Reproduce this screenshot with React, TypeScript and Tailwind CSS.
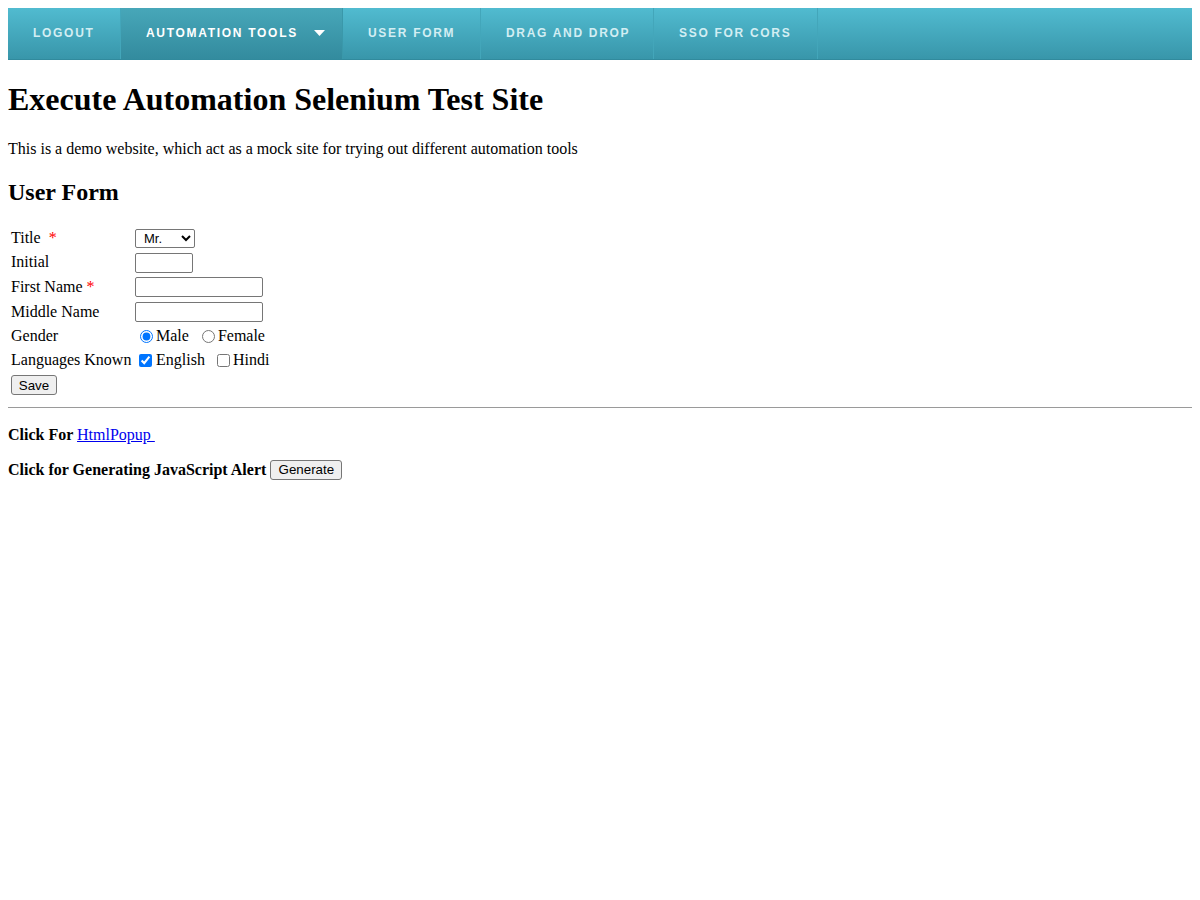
import { useState } from "react";

const navItems = [
	{ label: "LOGOUT", width: "w-[113px]" },
	{ label: "AUTOMATION TOOLS", width: "w-[222px]", active: true },
	{ label: "USER FORM", width: "w-[138px]" },
	{ label: "DRAG AND DROP", width: "w-[173px]" },
	{ label: "SSO FOR CORS", width: "w-[164px]" },
];

function NavBar() {
	return (
		<div className="flex h-[52px] w-full bg-gradient-to-b from-[#51bbd0] to-[#3896aa] border-b border-[#318a9d]">
			{navItems.map((item) =>
				item.active ? (
					<div
						key={item.label}
						className={`${item.width} h-full flex items-center pl-[25px] pb-[2px] bg-gradient-to-b from-[#47a7b9] to-[#338b9e] border-r border-[#3a98aa]`}
					>
						<span className="text-[12px] font-bold tracking-[1.7px] text-white">
							{item.label}
						</span>
						<svg width="11" height="6" viewBox="0 0 11 6" className="ml-[16px] mt-[1px]">
							<polygon points="0,0 11,0 5.5,6" fill="#ffffff" />
						</svg>
					</div>
				) : (
					<div
						key={item.label}
						className={`${item.width} h-full flex items-center pl-[25px] pb-[2px] border-r border-[#43a6ba]`}
					>
						<span className="text-[12px] font-bold tracking-[1.7px] text-[#d3eef3]">
							{item.label}
						</span>
					</div>
				)
			)}
		</div>
	);
}

function Required() {
	return <span className="text-[#ff0000]">*</span>;
}

export default function App() {
	const [gender, setGender] = useState("male");
	const [english, setEnglish] = useState(true);
	const [hindi, setHindi] = useState(false);

	const inputCls =
		"h-[20px] border border-[#767676] rounded-[2px] bg-white px-[2px] text-[13px] font-['Liberation_Sans',Arial,sans-serif]";
	const buttonCls =
		"h-[20px] border border-[#767676] rounded-[3px] bg-[#efefef] px-[6px] text-[13.33px] leading-none text-black font-['Liberation_Sans',Arial,sans-serif]";

	return (
		<div className="min-h-[900px] bg-white p-[8px] font-['Liberation_Serif','Times_New_Roman',serif] text-[16px] text-black">
			<div className="font-['Liberation_Sans',Arial,sans-serif]">
				<NavBar />
			</div>

			<h1 className="mt-[21px] text-[32px] font-bold leading-[37px]">
				Execute Automation Selenium Test Site
			</h1>
			<p className="mt-[22px] leading-[18px]">
				This is a demo website, which act as a mock site for trying out different automation tools
			</p>
			<h2 className="mt-[20px] text-[24px] font-bold leading-[28px]">User Form</h2>

			<div className="mt-[20px] pl-[3px] grid grid-cols-[124px_auto] grid-rows-[24px_24px_25px_25px_24px_24px_25px] items-center w-fit">
				<div>
					Title&nbsp; <Required />
				</div>
				<div>
					<select className="h-[19px] w-[60px] border border-[#767676] rounded-[2px] bg-white pl-[4px] text-[13px] font-['Liberation_Sans',Arial,sans-serif]">
						<option>Mr.</option>
						<option>Ms.</option>
					</select>
				</div>

				<div>Initial</div>
				<div>
					<input className={`${inputCls} w-[58px]`} />
				</div>

				<div>
					First Name <Required />
				</div>
				<div>
					<input className={`${inputCls} w-[128px]`} />
				</div>

				<div>Middle Name</div>
				<div>
					<input className={`${inputCls} w-[128px]`} />
				</div>

				<div>Gender</div>
				<div className="flex items-center pl-[5px]">
					<input
						type="radio"
						name="gender"
						checked={gender === "male"}
						onChange={() => setGender("male")}
						className="w-[13px] h-[13px] mr-[3px] accent-[#0075ff]"
					/>
					<span>Male</span>
					<input
						type="radio"
						name="gender"
						checked={gender === "female"}
						onChange={() => setGender("female")}
						className="w-[13px] h-[13px] ml-[13px] mr-[3px] accent-[#0075ff]"
					/>
					<span>Female</span>
				</div>

				<div className="whitespace-nowrap">Languages Known</div>
				<div className="flex items-center pl-[4px]">
					<input
						type="checkbox"
						checked={english}
						onChange={() => setEnglish(!english)}
						className="w-[13px] h-[13px] mr-[4px] accent-[#0075ff]"
					/>
					<span>English</span>
					<input
						type="checkbox"
						checked={hindi}
						onChange={() => setHindi(!hindi)}
						className="w-[13px] h-[13px] ml-[12px] mr-[3px] accent-[#0075ff]"
					/>
					<span>Hindi</span>
				</div>

				<div>
					<button className={`${buttonCls} w-[46px]`}>Save</button>
				</div>
				<div />
			</div>

			<hr className="mt-[10px] border-t border-[#9a9a9a]" />

			<p className="mt-[18px] leading-[18px]">
				<b>Click For </b>
				<a href="#" className="text-[#0000ee] underline">
					HtmlPopup&nbsp;
				</a>
			</p>
			<p className="mt-[14px] flex items-center">
				<b>Click for Generating JavaScript Alert</b>
				<button className={`${buttonCls} ml-[4px] w-[72px]`}>Generate</button>
			</p>
		</div>
	);
}
